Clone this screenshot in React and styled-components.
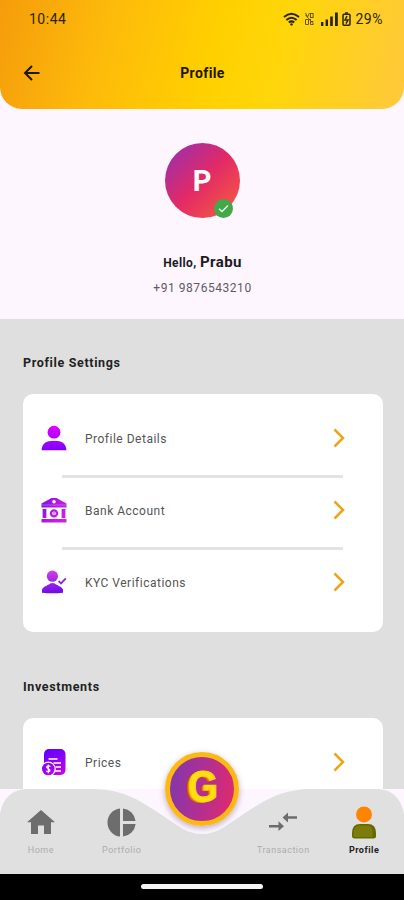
import React from 'react';
import styled, { createGlobalStyle } from 'styled-components';

const surfaceColor = '#fdf6ff';
const panelColor = '#dfdfdf';
const iconGrey = '#6d6d6d';
const accentColor = '#eba51c';

const GlobalStyle = createGlobalStyle`
  * {
    box-sizing: border-box;
  }
  body {
    background: #000;
    font-family: Roboto, sans-serif;
    margin: 0;
  }
  svg {
    display: block;
    flex: none;
  }
`;

const Screen = styled.div`
  background: ${surfaceColor};
  display: flex;
  flex-direction: column;
  height: 900px;
  overflow: hidden;
  width: 404px;
`;

const Header = styled.header`
  background: linear-gradient(
    105deg,
    #f59c0b 0%,
    #fdb90b 25%,
    #ffd000 53%,
    #ffd60a 68%,
    #ffc83c 100%
  );
  border-radius: 0 0 22px 22px;
  flex: none;
  height: 109px;
`;

const StatusBar = styled.div`
  align-items: center;
  color: #2b2410;
  display: flex;
  font-size: 14px;
  height: 37px;
  justify-content: space-between;
  letter-spacing: 0.5px;
  padding: 0 21px 0 29px;
`;

const StatusIcons = styled.div`
  align-items: center;
  display: flex;
  gap: 4.5px;
`;

const TitleBar = styled.div`
  align-items: center;
  display: grid;
  grid-template-columns: 40px 1fr 40px;
  height: 72px;
  padding: 0 23px;
`;

const Title = styled.h1`
  color: #1d1600;
  font-size: 14px;
  font-weight: 700;
  letter-spacing: 0.4px;
  margin: 0;
  padding-left: 1px;
  text-align: center;
`;

const Content = styled.main`
  display: flex;
  flex: none;
  flex-direction: column;
  height: 680px;
  overflow: hidden;
`;

const Intro = styled.section`
  align-items: center;
  display: flex;
  flex: none;
  flex-direction: column;
  height: 210px;
  padding-top: 34px;
`;

const Avatar = styled.div`
  align-items: center;
  background: linear-gradient(135deg, #9a2fae 5%, #e22a66 50%, #f9603c 100%);
  border-radius: 50%;
  color: #fff;
  display: flex;
  font-size: 29px;
  font-weight: 700;
  height: 75px;
  justify-content: center;
  position: relative;
  width: 75px;
`;

const VerifiedBadge = styled.span`
  align-items: center;
  background: #43a849;
  border-radius: 50%;
  bottom: 0;
  display: flex;
  height: 19px;
  justify-content: center;
  position: absolute;
  right: 7px;
  width: 19px;
`;

const Greeting = styled.p`
  color: #1c1a1e;
  font-size: 12px;
  font-weight: 700;
  letter-spacing: 0.4px;
  line-height: 20px;
  margin: 34px 0 0;
  padding-left: 1px;
  & strong {
    font-size: 15px;
    font-weight: 700;
    letter-spacing: 0.4px;
  }
`;

const Phone = styled.p`
  color: #5f5b61;
  font-size: 12px;
  letter-spacing: 0.55px;
  line-height: 16px;
  margin: 7px 0 0;
  padding-left: 1px;
`;

const Settings = styled.div`
  background: ${panelColor};
  flex: none;
  padding: 0 21.5px 0 23px;
`;

const SectionTitle = styled.h2`
  color: #222;
  font-size: 12.5px;
  font-weight: 700;
  letter-spacing: 0.65px;
  line-height: 16px;
  margin: 0;
  padding: 36px 0 23px;
`;

const Card = styled.section`
  background: #fff;
  border-radius: 10px;
  height: 238px;
  margin-bottom: 11px;
  padding: 8px 0;
`;

const Row = styled.div`
  align-items: center;
  display: flex;
  height: 72px;
  padding: 0 38px 0 18px;
`;

const RowLabel = styled.span`
  color: #555;
  flex: 1;
  font-size: 12px;
  letter-spacing: 0.5px;
  margin-left: 18px;
  padding-top: 1px;
`;

const Divider = styled.hr`
  background: #e3e3e3;
  border: 0;
  height: 3px;
  margin: 1px 40px -4px 39px;
`;

const BottomNav = styled.nav`
  display: grid;
  flex: none;
  grid-template-columns: repeat(5, 1fr);
  height: 85px;
  isolation: isolate;
  position: relative;
  &:before {
    background: #e0e0e0;
    clip-path: path(
      'M0 25 C3 9 12 0 28 0 H91 C124 0 140 12 162 26 C178 37 187 45 202 45 C217 45 226 37 242 26 C264 12 280 0 313 0 H376 C392 0 401 9 404 25 V85 H0 Z'
    );
    content: '';
    inset: 0;
    position: absolute;
    z-index: -1;
  }
`;

const NavItem = styled.div`
  align-items: center;
  color: ${({ $active }) => ($active ? '#222' : '#adadad')};
  display: flex;
  flex-direction: column;
  font-size: 9px;
  font-weight: ${({ $active }) => ($active ? 700 : 400)};
  letter-spacing: 0.5px;
  line-height: 12px;
  padding: 16px 0 0 1px;
`;

const NavIcon = styled.div`
  align-items: center;
  display: flex;
  height: 34px;
  justify-content: center;
  margin-bottom: 5px;
`;

const CoinButton = styled.div`
  align-items: center;
  background: linear-gradient(100deg, #8636aa 8%, #b12f93 50%, #df2a6d 95%);
  border: 5px solid #fdb813;
  border-radius: 50%;
  box-shadow: 0 2px 6px rgba(60, 30, 70, 0.35);
  display: flex;
  height: 74px;
  justify-content: center;
  justify-self: center;
  margin: -37px 0 0 1px;
  width: 74px;
`;

const CoinLetter = styled.span`
  -webkit-text-stroke: 1px #ffd60d;
  color: #ffdf0d;
  font-family: 'Liberation Sans', sans-serif;
  font-size: 44px;
  font-weight: 700;
  line-height: 1;
  padding: 0 0 4px 2px;
  text-shadow: -1px 0 #ff9d0a, -2px 1px #f37a12, -3px 1px #e8590c;
  transform: scaleX(0.88);
`;

const SystemBar = styled.div`
  background: #000;
  display: flex;
  flex: none;
  height: 26px;
  justify-content: center;
  padding-top: 10px;
`;

const HomeIndicator = styled.span`
  background: #f4f4f4;
  border-radius: 3px;
  height: 5px;
  width: 122px;
`;

const WifiIcon = () => (
  <svg width="17" height="14" viewBox="0 0 17 14" fill="none" stroke="#2b2410" strokeWidth="2">
    <path d="M1 5 Q8.5 -1.6 16 5" />
    <path d="M3.4 8 Q8.5 3.4 13.6 8" />
    <path d="M5.8 10.6 Q8.5 8.2 11.2 10.6" />
    <circle cx="8.5" cy="12.4" r="1.2" fill="#2b2410" stroke="none" />
  </svg>
);

const VoIcon = () => (
  <svg width="11" height="14" viewBox="0 0 10 14" fill="none" stroke="#6b5510" strokeWidth="1">
    <path d="M1 1 L3 5 L5 1 M1 7.5 V12.5 M1 7.5 H4 V12.5 H1" />
    <rect x="6" y="1.5" width="2.6" height="4" />
    <path d="M6 7 V12.5 H9 M6 9.5 H9 M1 3 L9 12" />
  </svg>
);

const SignalIcon = () => (
  <svg width="18" height="14" viewBox="0 0 18 14" fill="#2b2410">
    <rect x="1" y="10" width="2.4" height="4" />
    <rect x="5.6" y="7.5" width="2.4" height="6.5" />
    <rect x="10.2" y="4.5" width="2.6" height="9.5" />
    <rect x="15" y="0.5" width="2.8" height="13.5" />
  </svg>
);

const BatteryIcon = () => (
  <svg width="9" height="14" viewBox="0 0 9 14" fill="none" stroke="#2b2410" strokeWidth="1.5">
    <rect x="1" y="2.2" width="7" height="11" rx="1" />
    <path d="M3 1 H6" />
    <path d="M5 4 L3 8 H6 L4 11.6" />
  </svg>
);

const BackIcon = () => (
  <svg width="18" height="18" viewBox="0 0 18 18" fill="none" stroke="#201800" strokeWidth="2">
    <path d="M16.5 9 H2.5 M9 2 L2 9 L9 16" />
  </svg>
);

const CheckIcon = () => (
  <svg width="11" height="9" viewBox="0 0 11 9" fill="none" stroke="#e6f7e6" strokeWidth="1.4">
    <path d="M1 4.8 L4 7.5 L10 1.4" />
  </svg>
);

const ChevronIcon = () => (
  <svg width="12" height="20" viewBox="0 0 12 20" fill="none" stroke={accentColor} strokeWidth="2.5">
    <path d="M1.5 1.5 L10 10 L1.5 18.5" />
  </svg>
);

const PersonIcon = () => (
  <svg width="26" height="26" viewBox="0 0 26 26" fill="url(#person)">
    <defs>
      <linearGradient id="person" gradientUnits="userSpaceOnUse" x1="0" y1="1" x2="0" y2="25">
        <stop offset="0" stopColor="#e100ff" />
        <stop offset="1" stopColor="#7f00ff" />
      </linearGradient>
    </defs>
    <circle cx="13" cy="7.2" r="6.4" />
    <path d="M.6 25.2 C.8 19.5 4.6 16 9.5 16 H16.5 C21.4 16 25.2 19.5 25.4 25.2 Z" />
  </svg>
);

const BankIcon = () => (
  <svg width="26" height="26" viewBox="0 0 26 26" fill="url(#bank)">
    <defs>
      <linearGradient id="bank" gradientUnits="userSpaceOnUse" x1="0" y1="4" x2="26" y2="20">
        <stop offset="0" stopColor="#7512ea" />
        <stop offset="0.5" stopColor="#b51ae0" />
        <stop offset="1" stopColor="#d51cf0" />
      </linearGradient>
    </defs>
    <path fillRule="evenodd" d="M10.5 1 H15.5 L25.5 6.5 V10.5 H.5 V6.5 Z M13 2.9 A1.8 1.8 0 1 0 13 6.5 A1.8 1.8 0 1 0 13 2.9 Z" />
    <path d="M1 8 H25" stroke="#fff" strokeOpacity="0.35" strokeWidth="0.8" />
    <rect x="1.6" y="12" width="3.8" height="9" />
    <rect x="20.6" y="12" width="3.8" height="9" />
    <circle cx="13" cy="16.4" r="3" fill="none" stroke="url(#bank)" strokeWidth="2.4" />
    <path d="M12.5 15 h1 v2.8 h-1 Z" />
    <rect x=".5" y="22" width="25" height="3.4" rx=".6" />
  </svg>
);

const KycIcon = () => (
  <svg width="26" height="26" viewBox="0 0 26 26" fill="url(#kyc)">
    <defs>
      <linearGradient id="kyc" gradientUnits="userSpaceOnUse" x1="12" y1="2" x2="14" y2="24">
        <stop offset="0" stopColor="#cf3fe6" />
        <stop offset="1" stopColor="#6d0be8" />
      </linearGradient>
    </defs>
    <circle cx="11.4" cy="7.2" r="5.6" />
    <path d="M1 23.8 V20.5 C3 17.2 7 16.4 9 14.6 Q11.4 13.4 13.8 14.6 C16 16.4 20 17.2 22 20.5 V23.8 Q11.5 24.8 1 23.8 Z" />
    <path d="M17.6 12 L20 14.4 L24.8 9.4" fill="none" stroke="#8129db" strokeWidth="1.8" />
  </svg>
);

const PricesIcon = () => (
  <svg width="26" height="28" viewBox="0 0 26 28">
    <defs>
      <linearGradient id="prices" gradientUnits="userSpaceOnUse" x1="8" y1="2" x2="20" y2="27">
        <stop offset="0" stopColor="#6500ff" />
        <stop offset="1" stopColor="#c008e6" />
      </linearGradient>
    </defs>
    <rect x="3" y="1" width="21.5" height="26" rx="5" fill="url(#prices)" />
    <path d="M7.5 11 H16.5 M12.5 15 H20 M14.5 19 H20 M14 23 H20" stroke="#fff" strokeWidth="1.5" />
    <circle cx="7.3" cy="21" r="7.5" fill="#fff" />
    <circle cx="7.3" cy="21" r="6.3" fill="url(#prices)" />
    <path d="M9.4 18.6 Q7.3 17.2 5.8 18.5 C4.6 20.4 9.8 20.7 8.9 22.9 Q7.3 24.3 5.1 23 M7.3 16.6 V25.3" fill="none" stroke="#fff" strokeWidth="1.2" />
  </svg>
);

const HomeIcon = () => (
  <svg width="28" height="24" viewBox="0 0 28 24" fill={iconGrey}>
    <path d="M14 0 L28 12.3 H24 V24 H17 V15.5 H11 V24 H4 V12.3 H0 Z" />
  </svg>
);

const PortfolioIcon = () => (
  <svg width="29" height="29" viewBox="0 0 29 29" fill={iconGrey}>
    <path d="M13 .4 A14.2 14.2 0 0 0 13 28.6 Z" />
    <path d="M16 .4 A14.2 14.2 0 0 1 28.6 13 H16 Z" />
    <path d="M16 16 H28.6 A14.2 14.2 0 0 1 16 28.6 Z" />
  </svg>
);

const TransactionIcon = () => (
  <svg width="28" height="20" viewBox="0 0 28 20" fill={iconGrey}>
    <path d="M19 .6 V4.2 H28 V6.8 H19 V10.4 L13.5 5.5 Z" />
    <path d="M9.5 9.3 V12.9 H0 V15.5 H9.5 V19.1 L15 14.2 Z" />
  </svg>
);

const ProfileIcon = () => (
  <svg width="24" height="33" viewBox="0 0 24 33">
    <circle cx="12" cy="8.4" r="8" fill="#ff8500" />
    <path d="M0 30 V27 Q0 18 8 18 H16 Q24 18 24 27 V30 Q24 32.5 21.5 32.5 H2.5 Q0 32.5 0 30 Z" fill="#666800" />
    <path d="M1.5 30 V27 Q1.5 19.5 8 19.5 H15 Q20.5 19.5 20.5 26 V31 H2.5 Z" fill="#7b7c0a" />
  </svg>
);

const profileRows = [
  { label: 'Profile Details', icon: <PersonIcon /> },
  { label: 'Bank Account', icon: <BankIcon /> },
  { label: 'KYC Verifications', icon: <KycIcon /> },
];

const investmentRows = [{ label: 'Prices', icon: <PricesIcon /> }];

const MenuCard = ({ rows }) => (
  <Card>
    {rows.map(({ label, icon }, index) => (
      <React.Fragment key={label}>
        {index > 0 && <Divider />}
        <Row>
          {icon}
          <RowLabel>{label}</RowLabel>
          <ChevronIcon />
        </Row>
      </React.Fragment>
    ))}
  </Card>
);

const App = () => (
  <>
    <GlobalStyle />
    <Screen>
      <Header>
        <StatusBar>
          <span>10:44</span>
          <StatusIcons>
            <WifiIcon />
            <VoIcon />
            <SignalIcon />
            <BatteryIcon />
            <span>29%</span>
          </StatusIcons>
        </StatusBar>
        <TitleBar>
          <BackIcon />
          <Title>Profile</Title>
        </TitleBar>
      </Header>
      <Content>
        <Intro>
          <Avatar>
            P
            <VerifiedBadge>
              <CheckIcon />
            </VerifiedBadge>
          </Avatar>
          <Greeting>
            Hello, <strong>Prabu</strong>
          </Greeting>
          <Phone>+91 9876543210</Phone>
        </Intro>
        <Settings>
          <SectionTitle>Profile Settings</SectionTitle>
          <MenuCard rows={profileRows} />
          <SectionTitle>Investments</SectionTitle>
          <MenuCard rows={investmentRows} />
        </Settings>
      </Content>
      <BottomNav>
        <NavItem>
          <NavIcon>
            <HomeIcon />
          </NavIcon>
          Home
        </NavItem>
        <NavItem>
          <NavIcon>
            <PortfolioIcon />
          </NavIcon>
          Portfolio
        </NavItem>
        <CoinButton>
          <CoinLetter>G</CoinLetter>
        </CoinButton>
        <NavItem>
          <NavIcon>
            <TransactionIcon />
          </NavIcon>
          Transaction
        </NavItem>
        <NavItem $active>
          <NavIcon>
            <ProfileIcon />
          </NavIcon>
          Profile
        </NavItem>
      </BottomNav>
      <SystemBar>
        <HomeIndicator />
      </SystemBar>
    </Screen>
  </>
);

export default App;
